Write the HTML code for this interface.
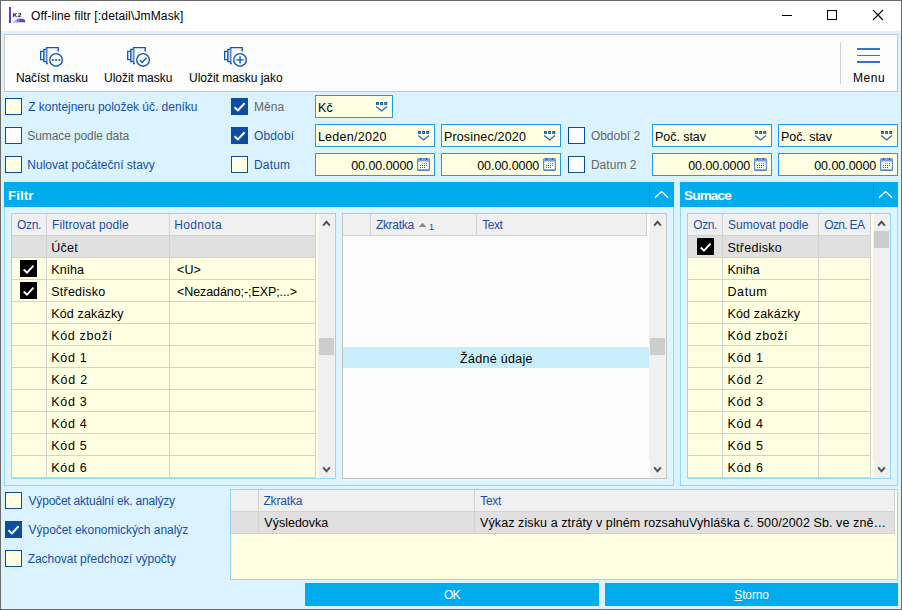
<!DOCTYPE html>
<html lang="cs"><head><meta charset="utf-8"><title>Off-line filtr</title>
<style>
html,body{margin:0;padding:0;background:#dbf3fe;}
#w{position:relative;width:902px;height:610px;overflow:hidden;font-family:"Liberation Sans", sans-serif;}
#w div,#w svg{position:absolute;}
#w svg{overflow:visible;display:block;}
#w .t{height:20px;line-height:0;white-space:pre;}
#w .t i{display:inline-block;position:static;width:0;height:20px;}
#w .t b{position:static;font-weight:normal;}
#w .t u{text-decoration:underline;text-underline-offset:1px;}

</style></head><body>
<div id="w">
<div style="left:0px;top:0px;width:902px;height:610px;background:#6a6a6a"></div>
<div style="left:1px;top:1px;width:900px;height:608px;background:#dbf3fe"></div>
<div style="left:1px;top:1px;width:900px;height:30px;background:#fff"></div>
<div style="left:9px;top:7px;width:2px;height:16px;background:#6b3ab9"></div>
<svg style="left:9px;top:17px" width="17" height="7" viewBox="0 0 17 7"><defs><linearGradient id="sw" x1="0" y1="0" x2="1" y2="0"><stop offset="0" stop-color="#e6cdf2" stop-opacity="0.55"/><stop offset="0.35" stop-color="#b79be6"/><stop offset="0.7" stop-color="#5b41c6"/><stop offset="1" stop-color="#6b3ab9"/></linearGradient></defs><path d="M2 5.9C4.5 4.4 7 1.6 10.5 1.5C13 1.4 15 2.2 16 3L16 5.6C12 4.6 8 5.9 2 5.9Z" fill="url(#sw)"/></svg>
<div style="left:782px;top:15px;width:10px;height:1px;background:#000"></div>
<div style="left:827px;top:10px;width:10px;height:10px;box-sizing:border-box;border:1px solid #000"></div>
<svg style="left:872px;top:9px" width="12" height="12" viewBox="0 0 12 12"><path d="M1 1L11 11M11 1L1 11" stroke="#000" stroke-width="1.1" fill="none"/></svg>
<div style="left:4px;top:34px;width:894px;height:58px;box-sizing:border-box;border:1px solid #c6c4c4;background:#fcfcfc;box-shadow:inset 0 0 0 1px #fff"></div>
<svg style="left:30px;top:40px" width="40" height="30" viewBox="0 0 40 30"><path d="M17.9 23.6H16.7V7.6H28.2V11.5" fill="none" stroke="#0f59ae" stroke-width="1.35"/><rect x="13.8" y="9.3" width="2.6" height="12.3" fill="#c5d7ee"/><path d="M16.2 9.3H13.8V21.6H16.2" fill="none" stroke="#0f59ae" stroke-width="1.35"/><path d="M13.4 11.3H10.7V19.6H13.4" fill="none" stroke="#0f59ae" stroke-width="1.35"/><circle cx="26.05" cy="19.9" r="6.3" fill="#fcfcfc" stroke="#0f59ae" stroke-width="1.4"/><rect x="21.900000000000002" y="19.1" width="1.8" height="1.8" fill="#0f59ae"/><rect x="25.150000000000002" y="19.1" width="1.8" height="1.8" fill="#0f59ae"/><rect x="28.400000000000002" y="19.1" width="1.8" height="1.8" fill="#0f59ae"/></svg>
<svg style="left:116.5px;top:40px" width="40" height="30" viewBox="0 0 40 30"><path d="M17.9 23.6H16.7V7.6H28.2V11.5" fill="none" stroke="#0f59ae" stroke-width="1.35"/><rect x="13.8" y="9.3" width="2.6" height="12.3" fill="#c5d7ee"/><path d="M16.2 9.3H13.8V21.6H16.2" fill="none" stroke="#0f59ae" stroke-width="1.35"/><path d="M13.4 11.3H10.7V19.6H13.4" fill="none" stroke="#0f59ae" stroke-width="1.35"/><circle cx="26.05" cy="19.9" r="6.3" fill="#fcfcfc" stroke="#0f59ae" stroke-width="1.4"/><path d="M22.9 20.1L25.2 22.4L29.4 17.7" fill="none" stroke="#0f59ae" stroke-width="1.4"/></svg>
<svg style="left:214px;top:40px" width="40" height="30" viewBox="0 0 40 30"><path d="M17.9 23.6H16.7V7.6H28.2V11.5" fill="none" stroke="#0f59ae" stroke-width="1.35"/><rect x="13.8" y="9.3" width="2.6" height="12.3" fill="#c5d7ee"/><path d="M16.2 9.3H13.8V21.6H16.2" fill="none" stroke="#0f59ae" stroke-width="1.35"/><path d="M13.4 11.3H10.7V19.6H13.4" fill="none" stroke="#0f59ae" stroke-width="1.35"/><circle cx="26.05" cy="19.9" r="6.3" fill="#fcfcfc" stroke="#0f59ae" stroke-width="1.4"/><path d="M22.3 19.9H29.8M26.05 16.2V23.6" fill="none" stroke="#0f59ae" stroke-width="1.4"/></svg>
<div style="left:840px;top:42px;width:1px;height:42px;background:#d0d0d0"></div>
<div style="left:857px;top:48px;width:23.3px;height:1.7px;background:#3575c4"></div>
<div style="left:857px;top:54.7px;width:23.3px;height:1.7px;background:#3575c4"></div>
<div style="left:857px;top:61.3px;width:23.3px;height:2px;background:#3575c4"></div>
<div style="left:5px;top:98px;width:17px;height:17px;box-sizing:border-box;border:1px solid #0c4da2;background:#ffffe1"></div>
<div style="left:5px;top:127px;width:17px;height:17px;box-sizing:border-box;border:1px solid #0c4da2;background:#fbfdff"></div>
<div style="left:5px;top:156px;width:17px;height:17px;box-sizing:border-box;border:1px solid #0c4da2;background:#ffffe1"></div>
<div style="left:231px;top:98px;width:17px;height:17px;background:#0c4da2"><svg width="17" height="17" viewBox="0 0 17 17" style="left:0;top:0"><path d="M3.5 9.2L6.9 12.4L13.6 5.3" fill="none" stroke="#ffffff" stroke-width="2"/></svg></div>
<div style="left:231px;top:127px;width:17px;height:17px;background:#0c4da2"><svg width="17" height="17" viewBox="0 0 17 17" style="left:0;top:0"><path d="M3.5 9.2L6.9 12.4L13.6 5.3" fill="none" stroke="#ffffe1" stroke-width="2"/></svg></div>
<div style="left:231px;top:156px;width:17px;height:17px;box-sizing:border-box;border:1px solid #0c4da2;background:#ffffe1"></div>
<div style="left:568px;top:127px;width:17px;height:17px;box-sizing:border-box;border:1px solid #0c4da2;background:#fbfdff"></div>
<div style="left:568px;top:156px;width:17px;height:17px;box-sizing:border-box;border:1px solid #0c4da2;background:#fbfdff"></div>
<div style="left:315px;top:95px;width:78px;height:23px;box-sizing:border-box;border:1px solid #1e9ceb;background:#ffffe1"></div>
<svg style="left:376px;top:102px" width="12" height="10" viewBox="0 0 12 10"><rect x="0.00" y="0" width="2.9" height="2.9" fill="#0f59ae"/><rect x="1.00" y="1" width="0.9" height="0.9" fill="#7fa9dc"/><rect x="4.12" y="0" width="2.9" height="2.9" fill="#0f59ae"/><rect x="5.12" y="1" width="0.9" height="0.9" fill="#7fa9dc"/><rect x="8.24" y="0" width="2.9" height="2.9" fill="#0f59ae"/><rect x="9.24" y="1" width="0.9" height="0.9" fill="#7fa9dc"/><path d="M0.2 4.5L5.6 8.9L11 4.5" fill="none" stroke="#2462b2" stroke-width="1.15"/></svg>
<div style="left:315px;top:124px;width:120px;height:23px;box-sizing:border-box;border:1px solid #1e9ceb;background:#ffffe1"></div>
<svg style="left:418px;top:131px" width="12" height="10" viewBox="0 0 12 10"><rect x="0.00" y="0" width="2.9" height="2.9" fill="#0f59ae"/><rect x="1.00" y="1" width="0.9" height="0.9" fill="#7fa9dc"/><rect x="4.12" y="0" width="2.9" height="2.9" fill="#0f59ae"/><rect x="5.12" y="1" width="0.9" height="0.9" fill="#7fa9dc"/><rect x="8.24" y="0" width="2.9" height="2.9" fill="#0f59ae"/><rect x="9.24" y="1" width="0.9" height="0.9" fill="#7fa9dc"/><path d="M0.2 4.5L5.6 8.9L11 4.5" fill="none" stroke="#2462b2" stroke-width="1.15"/></svg>
<div style="left:441px;top:124px;width:120px;height:23px;box-sizing:border-box;border:1px solid #1e9ceb;background:#ffffe1"></div>
<svg style="left:544px;top:131px" width="12" height="10" viewBox="0 0 12 10"><rect x="0.00" y="0" width="2.9" height="2.9" fill="#0f59ae"/><rect x="1.00" y="1" width="0.9" height="0.9" fill="#7fa9dc"/><rect x="4.12" y="0" width="2.9" height="2.9" fill="#0f59ae"/><rect x="5.12" y="1" width="0.9" height="0.9" fill="#7fa9dc"/><rect x="8.24" y="0" width="2.9" height="2.9" fill="#0f59ae"/><rect x="9.24" y="1" width="0.9" height="0.9" fill="#7fa9dc"/><path d="M0.2 4.5L5.6 8.9L11 4.5" fill="none" stroke="#2462b2" stroke-width="1.15"/></svg>
<div style="left:652px;top:124px;width:120px;height:23px;box-sizing:border-box;border:1px solid #1e9ceb;background:#ffffe1"></div>
<svg style="left:755px;top:131px" width="12" height="10" viewBox="0 0 12 10"><rect x="0.00" y="0" width="2.9" height="2.9" fill="#0f59ae"/><rect x="1.00" y="1" width="0.9" height="0.9" fill="#7fa9dc"/><rect x="4.12" y="0" width="2.9" height="2.9" fill="#0f59ae"/><rect x="5.12" y="1" width="0.9" height="0.9" fill="#7fa9dc"/><rect x="8.24" y="0" width="2.9" height="2.9" fill="#0f59ae"/><rect x="9.24" y="1" width="0.9" height="0.9" fill="#7fa9dc"/><path d="M0.2 4.5L5.6 8.9L11 4.5" fill="none" stroke="#2462b2" stroke-width="1.15"/></svg>
<div style="left:778px;top:124px;width:120px;height:23px;box-sizing:border-box;border:1px solid #1e9ceb;background:#ffffe1"></div>
<svg style="left:881px;top:131px" width="12" height="10" viewBox="0 0 12 10"><rect x="0.00" y="0" width="2.9" height="2.9" fill="#0f59ae"/><rect x="1.00" y="1" width="0.9" height="0.9" fill="#7fa9dc"/><rect x="4.12" y="0" width="2.9" height="2.9" fill="#0f59ae"/><rect x="5.12" y="1" width="0.9" height="0.9" fill="#7fa9dc"/><rect x="8.24" y="0" width="2.9" height="2.9" fill="#0f59ae"/><rect x="9.24" y="1" width="0.9" height="0.9" fill="#7fa9dc"/><path d="M0.2 4.5L5.6 8.9L11 4.5" fill="none" stroke="#2462b2" stroke-width="1.15"/></svg>
<div style="left:315px;top:153px;width:120px;height:23px;box-sizing:border-box;border:1px solid #1e9ceb;background:#ffffe1"></div>
<svg style="left:417px;top:158px" width="13" height="13" viewBox="0 0 13 13"><rect x="0.6" y="0.6" width="11.8" height="11.8" rx="1.3" fill="#fbfbf0" stroke="#5f8fc9" stroke-width="1.2"/><rect x="0.6" y="0.6" width="11.8" height="2.8" rx="1" fill="#79a2d4"/><rect x="0.4" y="11.6" width="12.2" height="1.2" rx="0.6" fill="#4a7fc0"/><rect x="2.9" y="0.1" width="1.3" height="1.9" fill="#1f5fb0"/><rect x="8.8" y="0.1" width="1.3" height="1.9" fill="#1f5fb0"/><rect x="5" y="5" width="1" height="1" fill="#1552a8" opacity="0.6"/><rect x="7" y="5" width="1" height="1" fill="#1552a8" opacity="0.6"/><rect x="9" y="5" width="1" height="1" fill="#1552a8" opacity="0.6"/><rect x="3" y="7" width="1" height="1" fill="#1552a8" opacity="0.9"/><rect x="5" y="7" width="1" height="1" fill="#1552a8" opacity="0.9"/><rect x="7" y="7" width="1" height="1" fill="#1552a8" opacity="1"/><rect x="9" y="7" width="1" height="1" fill="#1552a8" opacity="0.9"/><rect x="3" y="9" width="1" height="1" fill="#1552a8" opacity="0.9"/><rect x="5" y="9" width="1" height="1" fill="#1552a8" opacity="0.9"/><rect x="7" y="9" width="1" height="1" fill="#1552a8" opacity="1"/></svg>
<div style="left:441px;top:153px;width:120px;height:23px;box-sizing:border-box;border:1px solid #1e9ceb;background:#ffffe1"></div>
<svg style="left:543px;top:158px" width="13" height="13" viewBox="0 0 13 13"><rect x="0.6" y="0.6" width="11.8" height="11.8" rx="1.3" fill="#fbfbf0" stroke="#5f8fc9" stroke-width="1.2"/><rect x="0.6" y="0.6" width="11.8" height="2.8" rx="1" fill="#79a2d4"/><rect x="0.4" y="11.6" width="12.2" height="1.2" rx="0.6" fill="#4a7fc0"/><rect x="2.9" y="0.1" width="1.3" height="1.9" fill="#1f5fb0"/><rect x="8.8" y="0.1" width="1.3" height="1.9" fill="#1f5fb0"/><rect x="5" y="5" width="1" height="1" fill="#1552a8" opacity="0.6"/><rect x="7" y="5" width="1" height="1" fill="#1552a8" opacity="0.6"/><rect x="9" y="5" width="1" height="1" fill="#1552a8" opacity="0.6"/><rect x="3" y="7" width="1" height="1" fill="#1552a8" opacity="0.9"/><rect x="5" y="7" width="1" height="1" fill="#1552a8" opacity="0.9"/><rect x="7" y="7" width="1" height="1" fill="#1552a8" opacity="1"/><rect x="9" y="7" width="1" height="1" fill="#1552a8" opacity="0.9"/><rect x="3" y="9" width="1" height="1" fill="#1552a8" opacity="0.9"/><rect x="5" y="9" width="1" height="1" fill="#1552a8" opacity="0.9"/><rect x="7" y="9" width="1" height="1" fill="#1552a8" opacity="1"/></svg>
<div style="left:652px;top:153px;width:120px;height:23px;box-sizing:border-box;border:1px solid #1e9ceb;background:#ffffe1"></div>
<svg style="left:754px;top:158px" width="13" height="13" viewBox="0 0 13 13"><rect x="0.6" y="0.6" width="11.8" height="11.8" rx="1.3" fill="#fbfbf0" stroke="#5f8fc9" stroke-width="1.2"/><rect x="0.6" y="0.6" width="11.8" height="2.8" rx="1" fill="#79a2d4"/><rect x="0.4" y="11.6" width="12.2" height="1.2" rx="0.6" fill="#4a7fc0"/><rect x="2.9" y="0.1" width="1.3" height="1.9" fill="#1f5fb0"/><rect x="8.8" y="0.1" width="1.3" height="1.9" fill="#1f5fb0"/><rect x="5" y="5" width="1" height="1" fill="#1552a8" opacity="0.6"/><rect x="7" y="5" width="1" height="1" fill="#1552a8" opacity="0.6"/><rect x="9" y="5" width="1" height="1" fill="#1552a8" opacity="0.6"/><rect x="3" y="7" width="1" height="1" fill="#1552a8" opacity="0.9"/><rect x="5" y="7" width="1" height="1" fill="#1552a8" opacity="0.9"/><rect x="7" y="7" width="1" height="1" fill="#1552a8" opacity="1"/><rect x="9" y="7" width="1" height="1" fill="#1552a8" opacity="0.9"/><rect x="3" y="9" width="1" height="1" fill="#1552a8" opacity="0.9"/><rect x="5" y="9" width="1" height="1" fill="#1552a8" opacity="0.9"/><rect x="7" y="9" width="1" height="1" fill="#1552a8" opacity="1"/></svg>
<div style="left:778px;top:153px;width:120px;height:23px;box-sizing:border-box;border:1px solid #1e9ceb;background:#ffffe1"></div>
<svg style="left:880px;top:158px" width="13" height="13" viewBox="0 0 13 13"><rect x="0.6" y="0.6" width="11.8" height="11.8" rx="1.3" fill="#fbfbf0" stroke="#5f8fc9" stroke-width="1.2"/><rect x="0.6" y="0.6" width="11.8" height="2.8" rx="1" fill="#79a2d4"/><rect x="0.4" y="11.6" width="12.2" height="1.2" rx="0.6" fill="#4a7fc0"/><rect x="2.9" y="0.1" width="1.3" height="1.9" fill="#1f5fb0"/><rect x="8.8" y="0.1" width="1.3" height="1.9" fill="#1f5fb0"/><rect x="5" y="5" width="1" height="1" fill="#1552a8" opacity="0.6"/><rect x="7" y="5" width="1" height="1" fill="#1552a8" opacity="0.6"/><rect x="9" y="5" width="1" height="1" fill="#1552a8" opacity="0.6"/><rect x="3" y="7" width="1" height="1" fill="#1552a8" opacity="0.9"/><rect x="5" y="7" width="1" height="1" fill="#1552a8" opacity="0.9"/><rect x="7" y="7" width="1" height="1" fill="#1552a8" opacity="1"/><rect x="9" y="7" width="1" height="1" fill="#1552a8" opacity="0.9"/><rect x="3" y="9" width="1" height="1" fill="#1552a8" opacity="0.9"/><rect x="5" y="9" width="1" height="1" fill="#1552a8" opacity="0.9"/><rect x="7" y="9" width="1" height="1" fill="#1552a8" opacity="1"/></svg>
<div style="left:4px;top:182px;width:670px;height:25px;background:#00acee"></div>
<div style="left:649px;top:184px;width:1px;height:21px;background:#0090cc"></div>
<svg style="left:654px;top:190px" width="16" height="10" viewBox="0 0 16 10"><path d="M1 7.7L7.5 1.5L14.1 7.7" fill="none" stroke="#fff" stroke-width="1.25"/></svg>
<div style="left:4px;top:207px;width:670px;height:279px;box-sizing:border-box;border:1px solid #8fd9fb;border-top:none;background:#def4fe"></div>
<div style="left:680px;top:182px;width:218px;height:25px;background:#00acee"></div>
<div style="left:873px;top:184px;width:1px;height:21px;background:#0090cc"></div>
<svg style="left:878px;top:190px" width="16" height="10" viewBox="0 0 16 10"><path d="M1 7.7L7.5 1.5L14.1 7.7" fill="none" stroke="#fff" stroke-width="1.25"/></svg>
<div style="left:680px;top:207px;width:218px;height:279px;box-sizing:border-box;border:1px solid #8fd9fb;border-top:none;background:#def4fe"></div>
<div style="left:11px;top:213px;width:325px;height:266px;box-sizing:border-box;border:1px solid #8fd9fb;background:#ffffe1"></div>
<div style="left:12px;top:214px;width:304px;height:21px;background:#f0f0f0"></div>
<div style="left:12px;top:235px;width:304px;height:1px;background:#d2d2d2"></div>
<div style="left:12px;top:236px;width:304px;height:21px;background:#e0e0e0"></div>
<div style="left:12px;top:257px;width:304px;height:1px;background:#d2d2d2"></div>
<div style="left:12px;top:279px;width:304px;height:1px;background:#d2d2d2"></div>
<div style="left:12px;top:301px;width:304px;height:1px;background:#d2d2d2"></div>
<div style="left:12px;top:323px;width:304px;height:1px;background:#d2d2d2"></div>
<div style="left:12px;top:345px;width:304px;height:1px;background:#d2d2d2"></div>
<div style="left:12px;top:367px;width:304px;height:1px;background:#d2d2d2"></div>
<div style="left:12px;top:389px;width:304px;height:1px;background:#d2d2d2"></div>
<div style="left:12px;top:411px;width:304px;height:1px;background:#d2d2d2"></div>
<div style="left:12px;top:433px;width:304px;height:1px;background:#d2d2d2"></div>
<div style="left:12px;top:455px;width:304px;height:1px;background:#d2d2d2"></div>
<div style="left:12px;top:477px;width:304px;height:1px;background:#d2d2d2"></div>
<div style="left:46px;top:214px;width:1px;height:264px;background:#d2d2d2"></div>
<div style="left:169px;top:214px;width:1px;height:264px;background:#d2d2d2"></div>
<div style="left:315px;top:214px;width:1px;height:264px;background:#d2d2d2"></div>
<div style="left:318px;top:214px;width:17px;height:264px;background:#f0f0f0"></div>
<svg style="left:322px;top:220px" width="9" height="7" viewBox="0 0 9 7"><path d="M1.2 5.6L4.5 1.7L7.8 5.6" fill="none" stroke="#505050" stroke-width="2"/></svg>
<div style="left:318px;top:214px;width:1px;height:17px;background:#fff"></div>
<div style="left:318px;top:461px;width:1px;height:17px;background:#fff"></div>
<svg style="left:322px;top:466px" width="9" height="7" viewBox="0 0 9 7"><path d="M1.2 1.4L4.5 5.3L7.8 1.4" fill="none" stroke="#505050" stroke-width="2"/></svg>
<div style="left:319px;top:338px;width:15px;height:17px;background:#cdcdcd"></div>
<div style="left:20.4px;top:260px;width:17px;height:17px;background:#000"><svg width="17" height="17" viewBox="0 0 17 17" style="left:0;top:0"><path d="M3.7 9.5L7 12.7L13.5 5.6" fill="none" stroke="#fff" stroke-width="1.9"/></svg></div>
<div style="left:20.4px;top:282px;width:17px;height:17px;background:#000"><svg width="17" height="17" viewBox="0 0 17 17" style="left:0;top:0"><path d="M3.7 9.5L7 12.7L13.5 5.6" fill="none" stroke="#fff" stroke-width="1.9"/></svg></div>
<div style="left:342px;top:213px;width:325px;height:266px;box-sizing:border-box;border:1px solid #c4c4c4;background:#fcfcfc"></div>
<div style="left:343px;top:214px;width:304px;height:21px;background:#f0f0f0"></div>
<div style="left:343px;top:235px;width:304px;height:1px;background:#d2d2d2"></div>
<div style="left:370px;top:214px;width:1px;height:21px;background:#d2d2d2"></div>
<div style="left:476px;top:214px;width:1px;height:21px;background:#d2d2d2"></div>
<div style="left:646px;top:214px;width:1px;height:21px;background:#d2d2d2"></div>
<div style="left:649px;top:214px;width:17px;height:264px;background:#f0f0f0"></div>
<svg style="left:653px;top:220px" width="9" height="7" viewBox="0 0 9 7"><path d="M1.2 5.6L4.5 1.7L7.8 5.6" fill="none" stroke="#505050" stroke-width="2"/></svg>
<div style="left:649px;top:214px;width:1px;height:17px;background:#fff"></div>
<div style="left:649px;top:461px;width:1px;height:17px;background:#fff"></div>
<svg style="left:653px;top:466px" width="9" height="7" viewBox="0 0 9 7"><path d="M1.2 1.4L4.5 5.3L7.8 1.4" fill="none" stroke="#505050" stroke-width="2"/></svg>
<div style="left:650px;top:338px;width:15px;height:17px;background:#cdcdcd"></div>
<div style="left:343px;top:347px;width:306px;height:21px;background:#c9eefb"></div>
<svg style="left:418px;top:222px" width="9" height="6" viewBox="0 0 9 6"><path d="M0.6 5L4.5 0.8L8.4 5Z" fill="#8a8a8a"/></svg>
<div style="left:687px;top:213px;width:204px;height:266px;box-sizing:border-box;border:1px solid #8fd9fb;background:#ffffe1"></div>
<div style="left:688px;top:214px;width:183px;height:21px;background:#f0f0f0"></div>
<div style="left:688px;top:235px;width:183px;height:1px;background:#d2d2d2"></div>
<div style="left:688px;top:236px;width:183px;height:21px;background:#e0e0e0"></div>
<div style="left:688px;top:257px;width:183px;height:1px;background:#d2d2d2"></div>
<div style="left:688px;top:279px;width:183px;height:1px;background:#d2d2d2"></div>
<div style="left:688px;top:301px;width:183px;height:1px;background:#d2d2d2"></div>
<div style="left:688px;top:323px;width:183px;height:1px;background:#d2d2d2"></div>
<div style="left:688px;top:345px;width:183px;height:1px;background:#d2d2d2"></div>
<div style="left:688px;top:367px;width:183px;height:1px;background:#d2d2d2"></div>
<div style="left:688px;top:389px;width:183px;height:1px;background:#d2d2d2"></div>
<div style="left:688px;top:411px;width:183px;height:1px;background:#d2d2d2"></div>
<div style="left:688px;top:433px;width:183px;height:1px;background:#d2d2d2"></div>
<div style="left:688px;top:455px;width:183px;height:1px;background:#d2d2d2"></div>
<div style="left:688px;top:477px;width:183px;height:1px;background:#d2d2d2"></div>
<div style="left:722px;top:214px;width:1px;height:264px;background:#d2d2d2"></div>
<div style="left:818px;top:214px;width:1px;height:264px;background:#d2d2d2"></div>
<div style="left:870px;top:214px;width:1px;height:264px;background:#d2d2d2"></div>
<div style="left:873px;top:214px;width:17px;height:264px;background:#f0f0f0"></div>
<svg style="left:877px;top:220px" width="9" height="7" viewBox="0 0 9 7"><path d="M1.2 5.6L4.5 1.7L7.8 5.6" fill="none" stroke="#505050" stroke-width="2"/></svg>
<div style="left:873px;top:214px;width:1px;height:17px;background:#fff"></div>
<div style="left:873px;top:461px;width:1px;height:17px;background:#fff"></div>
<svg style="left:877px;top:466px" width="9" height="7" viewBox="0 0 9 7"><path d="M1.2 1.4L4.5 5.3L7.8 1.4" fill="none" stroke="#505050" stroke-width="2"/></svg>
<div style="left:874px;top:231px;width:15px;height:17px;background:#cdcdcd"></div>
<div style="left:696.6px;top:238px;width:17px;height:17px;background:#000"><svg width="17" height="17" viewBox="0 0 17 17" style="left:0;top:0"><path d="M3.7 9.5L7 12.7L13.5 5.6" fill="none" stroke="#fff" stroke-width="1.9"/></svg></div>
<div style="left:5px;top:492px;width:17px;height:17px;box-sizing:border-box;border:1px solid #0c4da2;background:#ffffe1"></div>
<div style="left:5px;top:521px;width:17px;height:17px;background:#0c4da2"><svg width="17" height="17" viewBox="0 0 17 17" style="left:0;top:0"><path d="M3.5 9.2L6.9 12.4L13.6 5.3" fill="none" stroke="#ffffe1" stroke-width="2"/></svg></div>
<div style="left:5px;top:550px;width:17px;height:17px;box-sizing:border-box;border:1px solid #0c4da2;background:#ffffe1"></div>
<div style="left:230px;top:489px;width:668px;height:91px;box-sizing:border-box;border:1px solid #8fd9fb;background:#ffffe1"></div>
<div style="left:231px;top:490px;width:664px;height:21px;background:#f0f0f0"></div>
<div style="left:231px;top:511px;width:664px;height:1px;background:#d2d2d2"></div>
<div style="left:231px;top:512px;width:664px;height:21px;background:#e0e0e0"></div>
<div style="left:231px;top:533px;width:664px;height:1px;background:#d2d2d2"></div>
<div style="left:258px;top:490px;width:1px;height:44px;background:#d2d2d2"></div>
<div style="left:474px;top:490px;width:1px;height:44px;background:#d2d2d2"></div>
<div style="left:894px;top:490px;width:1px;height:44px;background:#d2d2d2"></div>
<div style="left:305px;top:583px;width:294px;height:23px;background:#00acee"></div>
<div style="left:605px;top:583px;width:293px;height:23px;background:#00acee"></div>
<div class="t" style="left:12.79px;top:-3.00px"><i></i><b style="font-size:6px;color:#000;font-weight:bold;letter-spacing:0.800px;">K2</b></div>
<div class="t" style="left:31.00px;top:0.00px"><i></i><b style="font-size:12px;color:#000;letter-spacing:0.150px;">Off-line filtr [:detail\JmMask]</b></div>
<div class="t" style="left:15.89px;top:62.00px"><i></i><b style="font-size:12px;color:#000;letter-spacing:-0.057px;">Načíst masku</b></div>
<div class="t" style="left:104.05px;top:62.00px"><i></i><b style="font-size:12px;color:#000;letter-spacing:-0.033px;">Uložit masku</b></div>
<div class="t" style="left:189.05px;top:62.00px"><i></i><b style="font-size:12px;color:#000;letter-spacing:-0.028px;">Uložit masku jako</b></div>
<div class="t" style="left:852.89px;top:62.00px"><i></i><b style="font-size:12px;color:#000;letter-spacing:0.600px;">Menu</b></div>
<div class="t" style="left:28.21px;top:91.00px"><i></i><b style="font-size:12px;color:#184fa8;letter-spacing:-0.027px;">Z kontejneru položek úč. deníku</b></div>
<div class="t" style="left:27.31px;top:120.00px"><i></i><b style="font-size:12px;color:#666666;letter-spacing:-0.101px;">Sumace podle data</b></div>
<div class="t" style="left:27.31px;top:149.00px"><i></i><b style="font-size:12px;color:#184fa8;letter-spacing:0.008px;">Nulovat počáteční stavy</b></div>
<div class="t" style="left:253.89px;top:91.00px"><i></i><b style="font-size:12px;color:#666666;letter-spacing:0.090px;">Měna</b></div>
<div class="t" style="left:253.89px;top:120.00px"><i></i><b style="font-size:12px;color:#184fa8;letter-spacing:0.180px;">Období</b></div>
<div class="t" style="left:253.89px;top:149.00px"><i></i><b style="font-size:12px;color:#184fa8;letter-spacing:0.225px;">Datum</b></div>
<div class="t" style="left:590.89px;top:120.00px"><i></i><b style="font-size:12px;color:#666666;letter-spacing:-0.013px;">Období 2</b></div>
<div class="t" style="left:590.89px;top:149.00px"><i></i><b style="font-size:12px;color:#666666;letter-spacing:0.045px;">Datum 2</b></div>
<div class="t" style="left:318.10px;top:91.70px"><i></i><b style="font-size:12.5px;color:#000;">Kč</b></div>
<div class="t" style="left:317.89px;top:121.00px"><i></i><b style="font-size:12.5px;color:#000;letter-spacing:0.290px;">Leden/2020</b></div>
<div class="t" style="left:443.89px;top:121.00px"><i></i><b style="font-size:12.5px;color:#000;letter-spacing:0.172px;">Prosinec/2020</b></div>
<div class="t" style="left:655.05px;top:121.00px"><i></i><b style="font-size:12.5px;color:#000;letter-spacing:-0.056px;">Poč. stav</b></div>
<div class="t" style="left:781.05px;top:121.00px"><i></i><b style="font-size:12.5px;color:#000;letter-spacing:-0.056px;">Poč. stav</b></div>
<div class="t" style="left:351.21px;top:150.00px"><i></i><b style="font-size:12.5px;color:#000;letter-spacing:-0.050px;">00.00.0000</b></div>
<div class="t" style="left:477.21px;top:150.00px"><i></i><b style="font-size:12.5px;color:#000;letter-spacing:-0.050px;">00.00.0000</b></div>
<div class="t" style="left:688.21px;top:150.00px"><i></i><b style="font-size:12.5px;color:#000;letter-spacing:-0.050px;">00.00.0000</b></div>
<div class="t" style="left:814.21px;top:150.00px"><i></i><b style="font-size:12.5px;color:#000;letter-spacing:-0.050px;">00.00.0000</b></div>
<div class="t" style="left:8.10px;top:180.00px"><i></i><b style="font-size:13.5px;color:#fff;font-weight:bold;letter-spacing:-0.023px;">Filtr</b></div>
<div class="t" style="left:684.10px;top:180.00px"><i></i><b style="font-size:13.5px;color:#fff;font-weight:bold;letter-spacing:-0.846px;">Sumace</b></div>
<div class="t" style="left:17.05px;top:209.00px"><i></i><b style="font-size:12px;color:#184fa8;letter-spacing:-0.330px;">Ozn.</b></div>
<div class="t" style="left:52.05px;top:209.00px"><i></i><b style="font-size:12px;color:#184fa8;letter-spacing:0.090px;">Filtrovat podle</b></div>
<div class="t" style="left:174.31px;top:209.00px"><i></i><b style="font-size:12px;color:#184fa8;letter-spacing:0.315px;">Hodnota</b></div>
<div class="t" style="left:51.31px;top:231.60px"><i></i><b style="font-size:12.5px;color:#000;letter-spacing:0.240px;">Účet</b></div>
<div class="t" style="left:51.31px;top:253.60px"><i></i><b style="font-size:12.5px;color:#000;letter-spacing:0.202px;">Kniha</b></div>
<div class="t" style="left:51.31px;top:275.60px"><i></i><b style="font-size:12.5px;color:#000;letter-spacing:0.225px;">Středisko</b></div>
<div class="t" style="left:51.31px;top:297.60px"><i></i><b style="font-size:12.5px;color:#000;letter-spacing:0.135px;">Kód zakázky</b></div>
<div class="t" style="left:51.31px;top:319.60px"><i></i><b style="font-size:12.5px;color:#000;letter-spacing:0.641px;">Kód zboží</b></div>
<div class="t" style="left:51.31px;top:341.60px"><i></i><b style="font-size:12.5px;color:#000;letter-spacing:0.675px;">Kód 1</b></div>
<div class="t" style="left:51.31px;top:363.60px"><i></i><b style="font-size:12.5px;color:#000;letter-spacing:0.800px;">Kód 2</b></div>
<div class="t" style="left:51.31px;top:385.60px"><i></i><b style="font-size:12.5px;color:#000;letter-spacing:0.675px;">Kód 3</b></div>
<div class="t" style="left:51.31px;top:407.60px"><i></i><b style="font-size:12.5px;color:#000;letter-spacing:0.675px;">Kód 4</b></div>
<div class="t" style="left:51.31px;top:429.60px"><i></i><b style="font-size:12.5px;color:#000;letter-spacing:0.675px;">Kód 5</b></div>
<div class="t" style="left:51.31px;top:451.60px"><i></i><b style="font-size:12.5px;color:#000;letter-spacing:0.675px;">Kód 6</b></div>
<div class="t" style="left:177.00px;top:253.60px"><i></i><b style="font-size:12.5px;color:#000;letter-spacing:0.090px;">&lt;U&gt;</b></div>
<div class="t" style="left:177.00px;top:275.60px"><i></i><b style="font-size:12.5px;color:#000;letter-spacing:-0.085px;">&lt;Nezadáno;-;EXP;...&gt;</b></div>
<div class="t" style="left:375.89px;top:209.00px"><i></i><b style="font-size:12px;color:#184fa8;letter-spacing:-0.300px;">Zkratka</b></div>
<div class="t" style="left:429.10px;top:210.00px"><i></i><b style="font-size:9px;color:#184fa8;">1</b></div>
<div class="t" style="left:482.26px;top:209.00px"><i></i><b style="font-size:12px;color:#184fa8;letter-spacing:-0.450px;">Text</b></div>
<div class="t" style="left:460.00px;top:343.00px"><i></i><b style="font-size:12.5px;color:#000;letter-spacing:0.306px;">Žádné údaje</b></div>
<div class="t" style="left:693.26px;top:209.00px"><i></i><b style="font-size:12px;color:#184fa8;letter-spacing:-0.420px;">Ozn.</b></div>
<div class="t" style="left:728.05px;top:209.00px"><i></i><b style="font-size:12px;color:#184fa8;letter-spacing:0.030px;">Sumovat podle</b></div>
<div class="t" style="left:824.26px;top:209.00px"><i></i><b style="font-size:12px;color:#184fa8;letter-spacing:-0.675px;">Ozn. EA</b></div>
<div class="t" style="left:727.47px;top:231.60px"><i></i><b style="font-size:12.5px;color:#000;letter-spacing:0.259px;">Středisko</b></div>
<div class="t" style="left:727.47px;top:253.60px"><i></i><b style="font-size:12.5px;color:#000;letter-spacing:0.045px;">Kniha</b></div>
<div class="t" style="left:727.47px;top:275.60px"><i></i><b style="font-size:12.5px;color:#000;letter-spacing:0.607px;">Datum</b></div>
<div class="t" style="left:727.47px;top:297.60px"><i></i><b style="font-size:12.5px;color:#000;letter-spacing:0.162px;">Kód zakázky</b></div>
<div class="t" style="left:727.47px;top:319.60px"><i></i><b style="font-size:12.5px;color:#000;letter-spacing:0.562px;">Kód zboží</b></div>
<div class="t" style="left:727.47px;top:341.60px"><i></i><b style="font-size:12.5px;color:#000;letter-spacing:0.675px;">Kód 1</b></div>
<div class="t" style="left:727.47px;top:363.60px"><i></i><b style="font-size:12.5px;color:#000;letter-spacing:0.675px;">Kód 2</b></div>
<div class="t" style="left:727.47px;top:385.60px"><i></i><b style="font-size:12.5px;color:#000;letter-spacing:0.675px;">Kód 3</b></div>
<div class="t" style="left:727.47px;top:407.60px"><i></i><b style="font-size:12.5px;color:#000;letter-spacing:0.675px;">Kód 4</b></div>
<div class="t" style="left:727.47px;top:429.60px"><i></i><b style="font-size:12.5px;color:#000;letter-spacing:0.675px;">Kód 5</b></div>
<div class="t" style="left:727.47px;top:451.60px"><i></i><b style="font-size:12.5px;color:#000;letter-spacing:0.675px;">Kód 6</b></div>
<div class="t" style="left:28.58px;top:485.00px"><i></i><b style="font-size:12px;color:#184fa8;letter-spacing:-0.210px;">Výpočet aktuální ek. analýzy</b></div>
<div class="t" style="left:28.58px;top:514.00px"><i></i><b style="font-size:12px;color:#184fa8;letter-spacing:-0.042px;">Výpočet ekonomických analýz</b></div>
<div class="t" style="left:27.68px;top:543.00px"><i></i><b style="font-size:12px;color:#184fa8;letter-spacing:-0.040px;">Zachovat předchozí výpočty</b></div>
<div class="t" style="left:263.47px;top:485.00px"><i></i><b style="font-size:12px;color:#184fa8;letter-spacing:-0.180px;">Zkratka</b></div>
<div class="t" style="left:480.21px;top:485.00px"><i></i><b style="font-size:12px;color:#184fa8;letter-spacing:-0.270px;">Text</b></div>
<div class="t" style="left:264.37px;top:507.30px"><i></i><b style="font-size:12.5px;color:#000;letter-spacing:-0.010px;">Výsledovka</b></div>
<div class="t" style="left:480.05px;top:507.30px"><i></i><b style="font-size:12.5px;color:#000;letter-spacing:0.093px;">Výkaz zisku a ztráty v plném rozsahuVyhláška č. 500/2002 Sb. ve zně…</b></div>
<div class="t" style="left:444.10px;top:578.80px"><i></i><b style="font-size:12px;color:#fff;letter-spacing:-0.820px;">OK</b></div>
<div class="t" style="left:734.26px;top:578.80px"><i></i><b style="font-size:12px;color:#fff;letter-spacing:-0.126px;"><u>S</u>torno</b></div>
</div>
</body></html>
